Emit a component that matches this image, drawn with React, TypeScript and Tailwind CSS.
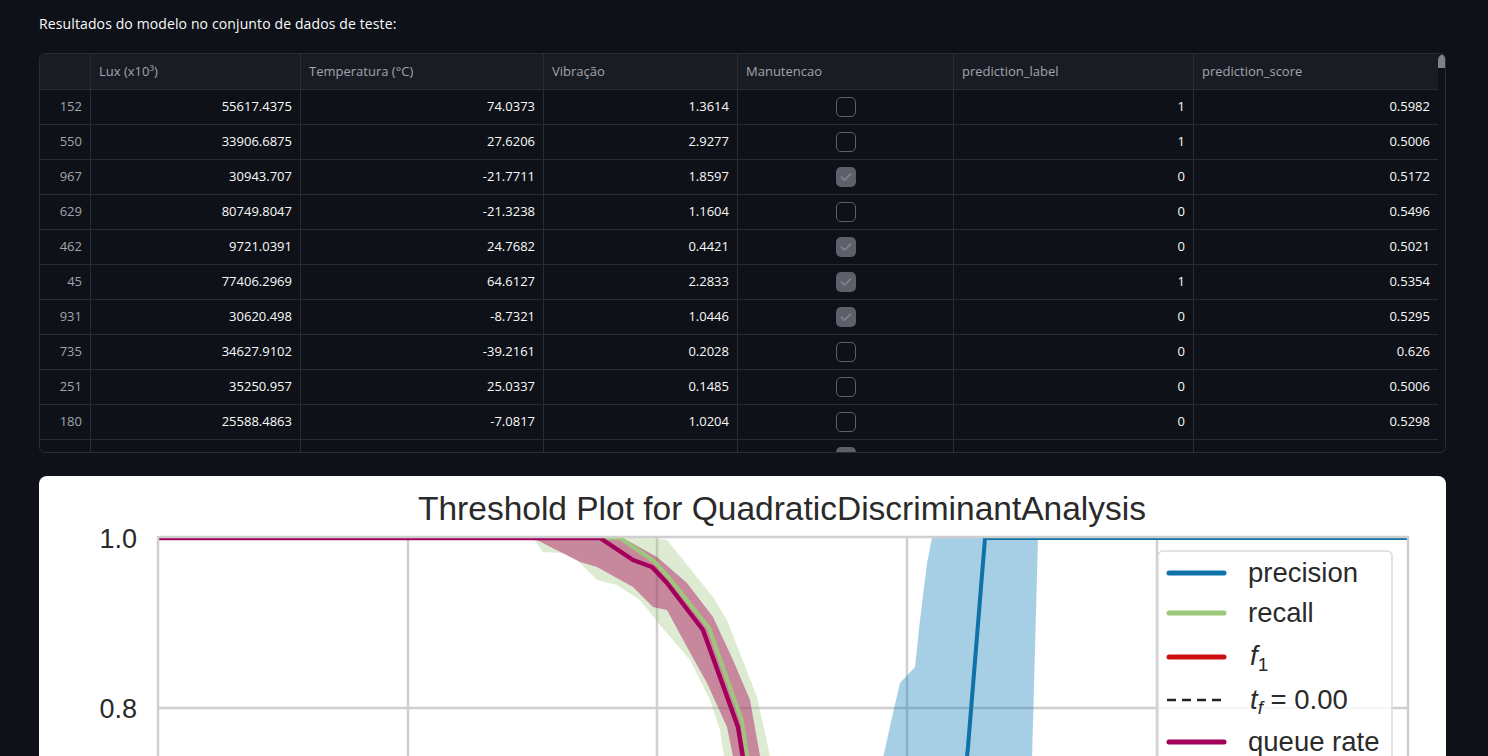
import React from "react";

type Row = {
  idx: string;
  lux: string;
  temp: string;
  vib: string;
  man: boolean;
  label: string;
  score: string;
};

const rows: Row[] = [
  { idx: "152", lux: "55617.4375", temp: "74.0373", vib: "1.3614", man: false, label: "1", score: "0.5982" },
  { idx: "550", lux: "33906.6875", temp: "27.6206", vib: "2.9277", man: false, label: "1", score: "0.5006" },
  { idx: "967", lux: "30943.707", temp: "-21.7711", vib: "1.8597", man: true, label: "0", score: "0.5172" },
  { idx: "629", lux: "80749.8047", temp: "-21.3238", vib: "1.1604", man: false, label: "0", score: "0.5496" },
  { idx: "462", lux: "9721.0391", temp: "24.7682", vib: "0.4421", man: true, label: "0", score: "0.5021" },
  { idx: "45", lux: "77406.2969", temp: "64.6127", vib: "2.2833", man: true, label: "1", score: "0.5354" },
  { idx: "931", lux: "30620.498", temp: "-8.7321", vib: "1.0446", man: true, label: "0", score: "0.5295" },
  { idx: "735", lux: "34627.9102", temp: "-39.2161", vib: "0.2028", man: false, label: "0", score: "0.626" },
  { idx: "251", lux: "35250.957", temp: "25.0337", vib: "0.1485", man: false, label: "0", score: "0.5006" },
  { idx: "180", lux: "25588.4863", temp: "-7.0817", vib: "1.0204", man: false, label: "0", score: "0.5298" },
  { idx: "", lux: "", temp: "", vib: "", man: true, label: "", score: "" },
];

function Checkbox({ checked }: { checked: boolean }) {
  if (checked) {
    return (
      <div className="w-5 h-5 rounded-[5px] bg-[#5d606a] flex items-center justify-center">
        <svg width="20" height="20" viewBox="0 0 20 20">
          <path d="M5.5 10.2l3 3L14.6 7.2" stroke="#80838c" strokeWidth="1.7" fill="none" strokeLinecap="round" strokeLinejoin="round" />
        </svg>
      </div>
    );
  }
  return <div className="w-5 h-5 rounded-[5px] border border-[#5d606a]" />;
}

function HeaderCell({ w, children, last }: { w: string; children?: React.ReactNode; last?: boolean }) {
  return (
    <div className={`${w} flex-none h-full flex items-center px-2 text-[#a1a4ad] ${last ? "" : "border-r border-[#2a2c35]"}`}>
      <span className="truncate">{children}</span>
    </div>
  );
}

function Cell({ w, children, last, gray, center }: { w: string; children?: React.ReactNode; last?: boolean; gray?: boolean; center?: boolean }) {
  return (
    <div
      className={`${w} flex-none h-full flex items-center px-2 ${center ? "justify-center" : "justify-end"} ${gray ? "text-[#a1a4ad]" : "text-[#fafafa]"} ${last ? "" : "border-r border-[#2a2c35]"}`}
    >
      {children}
    </div>
  );
}

function DataTable() {
  return (
    <div className="w-[1407px] h-[400px] border border-[#2a2c35] rounded-[6px] overflow-hidden flex font-['Open_Sans',sans-serif] text-[13px]">
      <div className="flex flex-col flex-none w-[1398px]">
        <div className="h-[36px] flex-none flex bg-[#1a1c24] border-b border-[#2a2c35]">
          <HeaderCell w="w-[51px]" />
          <HeaderCell w="w-[210px]">Lux (x10³)</HeaderCell>
          <HeaderCell w="w-[243px]">Temperatura (°C)</HeaderCell>
          <HeaderCell w="w-[194px]">Vibração</HeaderCell>
          <HeaderCell w="w-[216px]">Manutencao</HeaderCell>
          <HeaderCell w="w-[240px]">prediction_label</HeaderCell>
          <HeaderCell w="w-[244px]" last>
            prediction_score
          </HeaderCell>
        </div>
        {rows.map((r, i) => (
          <div key={i} className="h-[35px] flex-none flex border-b border-[#2a2c35]">
            <Cell w="w-[51px]" gray>
              {r.idx}
            </Cell>
            <Cell w="w-[210px]">{r.lux}</Cell>
            <Cell w="w-[243px]">{r.temp}</Cell>
            <Cell w="w-[194px]">{r.vib}</Cell>
            <Cell w="w-[216px]" center>
              <Checkbox checked={r.man} />
            </Cell>
            <Cell w="w-[240px]">{r.label}</Cell>
            <Cell w="w-[244px]" last>
              {r.score}
            </Cell>
          </div>
        ))}
      </div>
      <div className="flex-1 flex flex-col">
        <div className="h-[14px] bg-[#7e8189] rounded-tl-[6px]" />
      </div>
    </div>
  );
}

function Plot() {
  const font = "'Liberation Sans', Arial, sans-serif";
  const gridX = [369, 618, 868, 1118];
  return (
    <svg width="1407" height="300" viewBox="0 0 1407 300" className="block">
      <defs>
        <clipPath id="axclip">
          <rect x="119" y="62" width="1250" height="238" />
        </clipPath>
      </defs>
      <text
        x="743"
        y="44"
        textAnchor="middle"
        fontSize="33"
        fill="#2a2a2a"
        fontFamily={font}
        textLength="728"
        lengthAdjust="spacingAndGlyphs"
      >
        Threshold Plot for QuadraticDiscriminantAnalysis
      </text>
      <text x="98" y="72" textAnchor="end" fontSize="27" fill="#2a2a2a" fontFamily={font}>
        1.0
      </text>
      <text x="98" y="242" textAnchor="end" fontSize="27" fill="#2a2a2a" fontFamily={font}>
        0.8
      </text>

      {gridX.map((x) => (
        <line key={x} x1={x} y1="62" x2={x} y2="300" stroke="#cfcfcf" strokeWidth="2.5" />
      ))}
      <line x1="119" y1="232" x2="1369" y2="232" stroke="#cfcfcf" strokeWidth="2.5" />

      <g clipPath="url(#axclip)">
        <polygon
          points="494,62 504,76 524,77 538,84 558,104 578,109 601,124 621,149 651,184 671,224 681,254 688,300 735,300 731,280 718,221 688,144 674,121 628,64 614,62"
          fill="#9cc77f"
          fillOpacity="0.35"
        />
        <polygon
          points="494,62 541,86 558,91 594,111 614,131 628,134 648,171 668,207 688,251 698,300 726,300 721,280 711,224 694,184 674,141 648,107 618,81 584,62"
          fill="#ae105f"
          fillOpacity="0.45"
        />
        <polygon
          points="893,62 888,87 881,144 876,191 861,207 854,237 840,300 992,300 993,284 999,62"
          fill="#0072b2"
          fillOpacity="0.35"
        />
        <polyline
          points="119,62 581,62 616,86 632,104 670,152 703,245 711,300"
          fill="none"
          stroke="#9dc77b"
          strokeWidth="4"
          strokeLinejoin="round"
        />
        <polyline
          points="119,62 561,62 594,84 613,91 628,107 664,154 699,251 707,300"
          fill="none"
          stroke="#a3005c"
          strokeWidth="4.5"
          strokeLinejoin="round"
        />
        <polyline
          points="1369,62 946,62 929,271 926,300"
          fill="none"
          stroke="#0f72a8"
          strokeWidth="4"
          strokeLinejoin="round"
        />
      </g>

      <line x1="119" y1="61" x2="1369" y2="61" stroke="#cfcfcf" strokeWidth="2.5" />
      <line x1="119" y1="60" x2="119" y2="300" stroke="#cfcfcf" strokeWidth="2.5" />
      <line x1="1369" y1="60" x2="1369" y2="300" stroke="#cfcfcf" strokeWidth="2.5" />

      <rect x="1119" y="75" width="234" height="260" rx="5" fill="#ffffff" fillOpacity="0.8" stroke="#dadada" strokeWidth="1.5" />
      <line x1="1130" y1="97" x2="1185" y2="97" stroke="#0f72a8" strokeWidth="5" strokeLinecap="round" />
      <text x="1209" y="106" fontSize="27.5" fill="#2a2a2a" fontFamily={font}>
        precision
      </text>
      <line x1="1130" y1="137" x2="1185" y2="137" stroke="#9dc77b" strokeWidth="5" strokeLinecap="round" />
      <text x="1209" y="146" fontSize="27.5" fill="#2a2a2a" fontFamily={font}>
        recall
      </text>
      <line x1="1130" y1="181" x2="1185" y2="181" stroke="#cc1010" strokeWidth="5" strokeLinecap="round" />
      <text x="1211" y="189" fontSize="27.5" fill="#2a2a2a" fontFamily={font}>
        <tspan fontStyle="italic">f</tspan>
        <tspan fontSize="19" dy="6">1</tspan>
      </text>
      <line x1="1128" y1="224" x2="1187" y2="224" stroke="#222222" strokeWidth="2.5" strokeDasharray="9 6" />
      <text x="1211" y="233" fontSize="27.5" fill="#2a2a2a" fontFamily={font}>
        <tspan fontStyle="italic">t</tspan>
        <tspan fontStyle="italic" fontSize="19" dy="5">f</tspan>
        <tspan dy="-5"> = 0.00</tspan>
      </text>
      <line x1="1130" y1="266" x2="1185" y2="266" stroke="#a3005c" strokeWidth="5" strokeLinecap="round" />
      <text x="1209" y="275" fontSize="27.5" fill="#2a2a2a" fontFamily={font}>
        queue rate
      </text>
    </svg>
  );
}

export default function App() {
  return (
    <div className="min-h-screen bg-[#0e1117] pt-[14px] pl-[39px] pb-10 font-['Open_Sans',sans-serif]">
      <p className="text-[14px] leading-[20px] tracking-[0.12px] text-[#fafafa] m-0">Resultados do modelo no conjunto de dados de teste:</p>
      <div className="mt-[19px]">
        <DataTable />
      </div>
      <div className="mt-[23px] w-[1407px] h-[420px] bg-white rounded-[8px] overflow-hidden">
        <Plot />
      </div>
    </div>
  );
}
